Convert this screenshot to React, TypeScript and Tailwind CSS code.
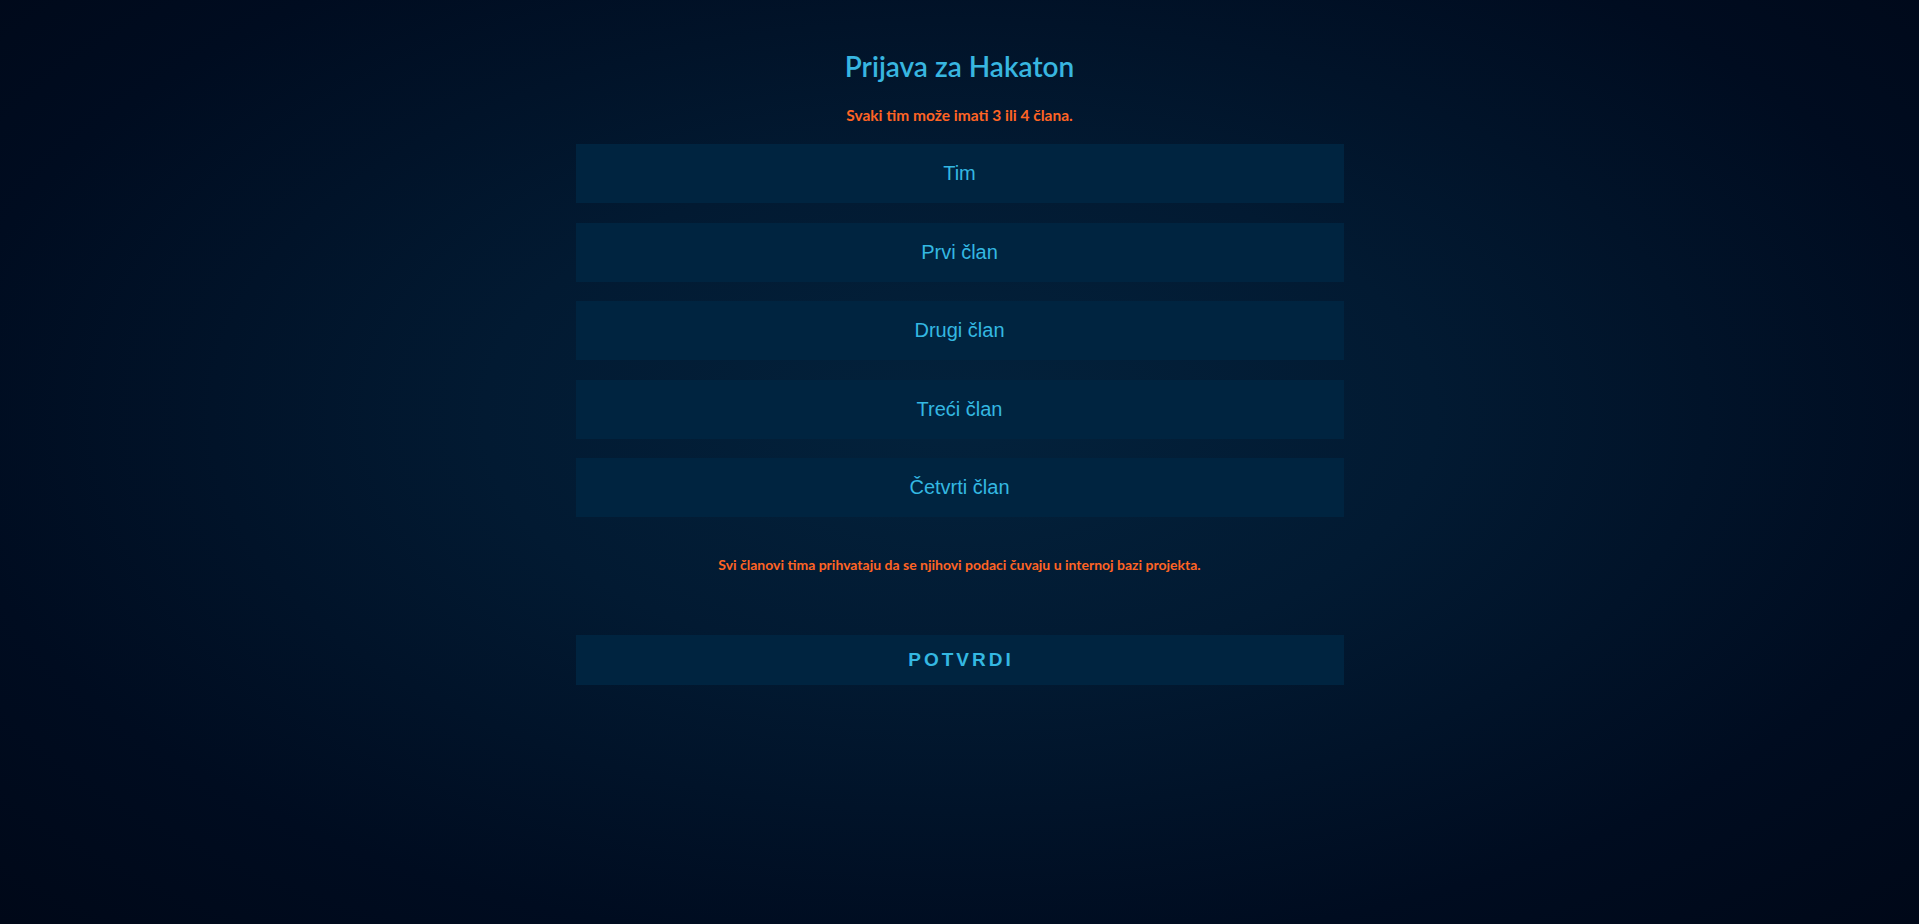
import { useState } from "react";

const fields = ["Tim", "Prvi član", "Drugi član", "Treći član", "Četvrti član"];

const App = () => {
  const [values, setValues] = useState<string[]>(fields.map(() => ""));

  return (
    <div className="min-h-[924px] w-full bg-[radial-gradient(ellipse_at_50%_45%,#03223c_0%,#021a32_35%,#000c20_75%,#000818_100%)]">
      <form
        className="mx-auto flex w-full max-w-[768px] flex-col items-center pt-[48px]"
        onSubmit={(e) => e.preventDefault()}
      >
        <h1 className="h-[36px] font-['Lato',sans-serif] text-[28px] leading-[36px] font-semibold text-[#38b6e0]">
          Prijava za Hakaton
        </h1>
        <p className="mt-[21px] h-[20px] font-['Lato',sans-serif] text-[15.5px] leading-[20px] font-bold text-[#ff6424]">
          Svaki tim može imati 3 ili 4 člana.
        </p>

        <div className="mt-[19px] flex w-full flex-col gap-[19.5px]">
          {fields.map((f, i) => (
            <input
              key={f}
              type="text"
              placeholder={f}
              value={values[i]}
              onChange={(e) => {
                const next = [...values];
                next[i] = e.target.value;
                setValues(next);
              }}
              className="h-[59px] w-full bg-[#002440] text-center font-['Liberation_Sans',Arial,sans-serif] text-[20px] text-[#34b8e2] outline-none placeholder:text-[#34b8e2]"
            />
          ))}
        </div>

        <p className="mt-[39px] h-[18px] font-['Lato',sans-serif] text-[14px] leading-[18px] font-bold text-[#ff6424]">
          Svi članovi tima prihvataju da se njihovi podaci čuvaju u internoj bazi projekta.
        </p>

        <button
          type="submit"
          className="mt-[61px] h-[50px] w-full bg-[#002440] pl-[3px] font-['Liberation_Sans',Arial,sans-serif] text-[19px] font-bold tracking-[3px] text-[#34b8e2]"
        >
          POTVRDI
        </button>
      </form>
    </div>
  );
};

export default App;
